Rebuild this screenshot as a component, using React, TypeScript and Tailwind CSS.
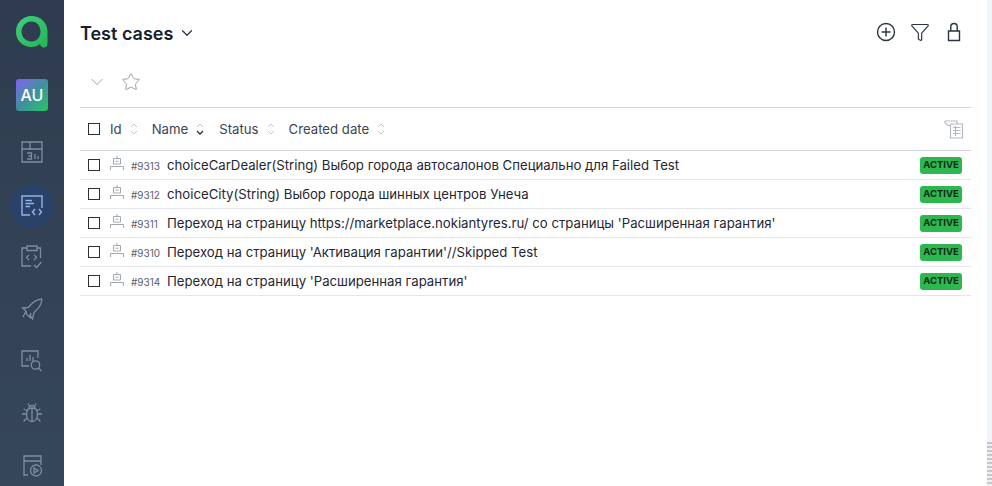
import { ChevronDown, Filter, Star } from "lucide-react";

const rows = [
  { id: "#9313", name: "choiceCarDealer(String) Выбор города автосалонов Специально для Failed Test" },
  { id: "#9312", name: "choiceCity(String) Выбор города шинных центров Унеча" },
  { id: "#9311", name: "Переход на страницу https://marketplace.nokiantyres.ru/ со страницы 'Расширенная гарантия'" },
  { id: "#9310", name: "Переход на страницу 'Активация гарантии'//Skipped Test" },
  { id: "#9314", name: "Переход на страницу 'Расширенная гарантия'" },
];

function Logo() {
  return (
    <svg width="34" height="34" viewBox="0 0 34 34" fill="none">
      <defs>
        <linearGradient id="lg" x1="0" y1="0" x2="1" y2="1">
          <stop offset="0" stopColor="#3fd07a" />
          <stop offset="1" stopColor="#27b45a" />
        </linearGradient>
      </defs>
      <path
        fillRule="evenodd"
        d="M16.5 1C25.5 1 32.5 7.5 32.5 16.5V28.5C32.5 31 31 32.5 29 32.5C27 32.5 25.5 31 25 29C22.8 31 20 32 16.5 32C7.5 32 1 25.5 1 16.8C1 8 7.8 1 16.5 1ZM16.5 6.5C11 6.5 6.5 11 6.5 16.8C6.5 22.3 11 26.5 16.5 26.5C22 26.5 25.5 22.3 25.5 16.8C25.5 11 22 6.5 16.5 6.5Z"
        fill="url(#lg)"
      />
    </svg>
  );
}

function RobotIcon() {
  return (
    <svg width="14" height="15" viewBox="0 0 14 15" fill="none" stroke="#a3a9b2" strokeWidth="1">
      <path d="M7 0V2.5M3.5 2.5H10.5V8H3.5ZM5.5 5.2H8.5M0.5 14V10.5H13.5V14" />
    </svg>
  );
}

function ColumnsIcon() {
  return (
    <svg width="20" height="20" viewBox="0 0 20 20" fill="none" stroke="#b4bac3" strokeWidth="1.2">
      <path d="M1 2H13V5H18.5V19H6.5V7M1 2V3.5L4 6.5H6.5M13 5H6.5V7M9 8.5H16.5M9 11.5H16.5M9 14.5H16.5M11.5 7V17" />
    </svg>
  );
}

function NavSlot({ children }: { children: React.ReactNode }) {
  return <div className="flex h-[24px] w-[64px] items-center justify-center">{children}</div>;
}

const navStroke = "#7f8da1";

function Sidebar() {
  return (
    <aside className="flex h-[486px] w-[64px] shrink-0 flex-col items-center overflow-hidden bg-gradient-to-b from-[#2f3c4f] to-[#364759]">
      <div className="mt-[15px]">
        <Logo />
      </div>
      <div className="mt-[30px] flex h-[32px] w-[32px] items-center justify-center rounded-[3px] bg-gradient-to-br from-[#7c5cf0] via-[#3f8f9c] to-[#22c55e] text-[16px] font-medium text-white">
        AU
      </div>
      <div className="mt-[29px]">
        <NavSlot>
          <svg width="22" height="22" viewBox="0 0 22 22" fill="none" stroke={navStroke} strokeWidth="1.3">
            <path d="M1 1H21V21H1ZM1 8H21M9 1V8M6 12H10.5V18H6M10.5 15H7.5M14 13V18M17 15V18" />
          </svg>
        </NavSlot>
      </div>
      <div className="mt-[20px] flex h-[44px] w-[44px] items-center justify-center rounded-full bg-[#2b4268]">
        <svg width="22" height="22" viewBox="0 0 22 22" fill="none" stroke="#8fb4ea" strokeWidth="1.4">
          <path d="M9 20H1V1H21V13M4.5 5.5H11M4.5 8.5H13M4.5 11.5H9M14 14L11.5 17L14 20M18 14L20.5 17L18 20" />
        </svg>
      </div>
      <div className="mt-[17px]">
        <NavSlot>
          <svg width="22" height="24" viewBox="0 0 22 24" fill="none" stroke={navStroke} strokeWidth="1.3">
            <path d="M6 3H1V21H10M16 3H19.5V13M6 1H16V5.5H6ZM8 10L5.5 12.5L8 15M13 10L15.5 12.5L13 15M13 20L15.5 22.5L20.5 17" />
          </svg>
        </NavSlot>
      </div>
      <div className="mt-[28px]">
        <NavSlot>
          <svg width="22" height="22" viewBox="0 0 22 22" fill="none" stroke={navStroke} strokeWidth="1.3">
            <path d="M21 1C16 1.5 12.5 3.5 9.5 7L7 9.5L1.5 10L5 13L5.5 16L9 19.5L10 15M21 1C20.5 6 18.5 9.5 15 12.5L13 14.5L11.5 21L8.5 17M5 13L2 19" />
          </svg>
        </NavSlot>
      </div>
      <div className="mt-[28px]">
        <NavSlot>
          <svg width="22" height="22" viewBox="0 0 22 22" fill="none" stroke={navStroke} strokeWidth="1.3">
            <path d="M8 16H1V1H17V8M6 11V8M9 11V5M12 11V7M20.5 21L17.5 18" />
            <circle cx="14.5" cy="15" r="4.2" />
          </svg>
        </NavSlot>
      </div>
      <div className="mt-[28px]">
        <NavSlot>
          <svg width="22" height="22" viewBox="0 0 22 22" fill="none" stroke={navStroke} strokeWidth="1.3">
            <path d="M11 6C7.5 6 5.5 8.5 5.5 12C5.5 16 7.5 19.5 11 19.5C14.5 19.5 16.5 16 16.5 12C16.5 8.5 14.5 6 11 6ZM11 6V19.5M8 6.5C8 4.5 9.2 3.5 11 3.5C12.8 3.5 14 4.5 14 6.5M8 3.5L7 1.5M14 3.5L15 1.5M5.5 12H1M16.5 12H21M6 16L2.5 19.5M16 16L19.5 19.5M6 8.5L2.5 7M16 8.5L19.5 7" />
          </svg>
        </NavSlot>
      </div>
      <div className="mt-[29px]">
        <NavSlot>
          <svg width="22" height="22" viewBox="0 0 22 22" fill="none" stroke={navStroke} strokeWidth="1.3">
            <path d="M7 20H3V1H20V10M3 6H20M13 13L13 18L17 15.5Z" />
            <circle cx="15" cy="15.5" r="5.5" />
          </svg>
        </NavSlot>
      </div>
    </aside>
  );
}

function Checkbox() {
  return <span className="h-[12px] w-[12px] shrink-0 border border-[#2b2f36] bg-white" />;
}

function Sortable({ label, active, className }: { label: string; active?: boolean; className: string }) {
  return (
    <div className={`flex items-center ${className}`}>
      <span className="mt-[2px] text-[13.2px] text-[#3b4452]">{label}</span>
      <svg className="ml-[7px]" width="10" height="14" viewBox="0 0 10 14" fill="none" stroke="#c3c8cf" strokeWidth="1">
        <path d="M2 5L5 2L8 5" />
        <path d="M2 9L5 12L8 9" stroke={active ? "#2b2f36" : "#c3c8cf"} strokeWidth={active ? 1.3 : 1} />
      </svg>
    </div>
  );
}

export default function App() {
  return (
    <div className="flex h-[486px] w-[992px] overflow-hidden bg-white font-['Inter',sans-serif]">
      <Sidebar />
      <main className="flex min-w-0 flex-1 flex-col pl-[16px] pr-[16px]">
        <header className="flex h-[66px] items-center justify-between">
          <div className="flex items-center gap-[5px]">
            <h1 className="mt-[1px] text-[18px] font-semibold text-[#15202f]">Test cases</h1>
            <ChevronDown size={18} strokeWidth={1.6} className="text-[#2b3442]" />
          </div>
          <div className="mb-[2px] mr-[7px] flex items-center gap-[14px] text-[#2b3442]">
            <svg width="20" height="20" viewBox="0 0 20 20" fill="none" stroke="currentColor" strokeWidth="1.4">
              <circle cx="10" cy="10" r="8.5" />
              <path d="M10 5.5V14.5M5.5 10H14.5" />
            </svg>
            <Filter size={20} strokeWidth={1.4} />
            <svg width="20" height="20" viewBox="0 0 20 20" fill="none" stroke="currentColor" strokeWidth="1.4">
              <path d="M4.5 9H15.5V18.5H4.5ZM6.8 9V5C6.8 3 8 1.5 10 1.5C12 1.5 13.2 3 13.2 5V9" />
            </svg>
          </div>
        </header>
        <div className="flex h-[41px] items-center gap-[14px] pb-[9px] pl-[7px]">
          <ChevronDown size={20} strokeWidth={1.2} className="text-[#98a1ad]" />
          <Star size={20} strokeWidth={1.2} className="text-[#98a1ad]" />
        </div>
        <div className="flex h-[44px] items-center border-y border-[#cfd4da] pl-[8px] pr-[7px]">
          <Checkbox />
          <div className="ml-[10px] flex items-center">
            <Sortable label="Id" className="" />
            <Sortable label="Name" active className="ml-[13px]" />
            <Sortable label="Status" className="ml-[14px]" />
            <Sortable label="Created date" className="ml-[13px]" />
          </div>
          <div className="ml-auto">
            <ColumnsIcon />
          </div>
        </div>
        {rows.map((r) => (
          <div key={r.id} className="flex h-[29px] items-center border-b border-[#e3e6ea] pl-[8px] pr-[9px]">
            <Checkbox />
            <span className="-mt-[4px] ml-[10px]">
              <RobotIcon />
            </span>
            <span className="ml-[7px] mt-[2px] w-[36px] text-[10px] text-[#59616d]">{r.id}</span>
            <span className="mt-[2px] text-[13.2px] text-[#1f2733]">{r.name}</span>
            <span className="ml-auto mt-[1px] flex h-[17px] w-[42px] items-center justify-center rounded-[3px] bg-[#2cb84f] text-[9.5px] font-bold text-[#0f2a16]">
              ACTIVE
            </span>
          </div>
        ))}
      </main>
      <div className="flex w-[5px] shrink-0 flex-col justify-end bg-[#f1f4f9]">
        <div className="h-[44px] bg-[repeating-linear-gradient(to_bottom,#c4c6ca_0px,#c4c6ca_2px,#eef0f4_2px,#eef0f4_4px)]" />
      </div>
    </div>
  );
}
